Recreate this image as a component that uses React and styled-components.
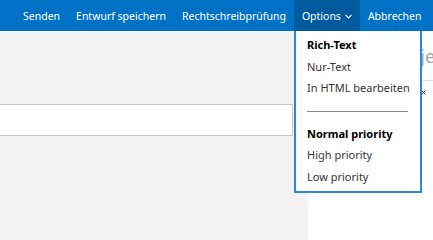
import React from "react";
import styled, { createGlobalStyle } from "styled-components";

const Global = createGlobalStyle`
  html, body { margin: 0; padding: 0; }
  body {
    width: 433px;
    height: 240px;
    overflow: hidden;
    font-family: "Noto Sans", "Open Sans", sans-serif;
    background: #ffffff;
  }
  #root { height: 240px; }
`;

const Page = styled.div`
  position: relative;
  display: flex;
  flex-direction: column;
  width: 433px;
  height: 240px;
  overflow: hidden;
`;

const Toolbar = styled.div`
  display: flex;
  align-items: stretch;
  height: 31px;
  padding-left: 15px;
  background: #0072c6;
  flex: none;
`;

const ToolButton = styled.div`
  display: flex;
  align-items: center;
  gap: 4px;
  padding: 0 8px;
  font-size: 10.5px;
  color: #ffffff;
  white-space: nowrap;
  background: ${(p) => (p.$active ? "#005a9e" : "transparent")};
`;

const Chevron = styled.svg`
  width: 7px;
  height: 5px;
  margin-top: 1px;
`;

const Body = styled.div`
  flex: 1;
  display: flex;
`;

const LeftPane = styled.div`
  width: 308px;
  flex: none;
  background: #f2f2f2;
  padding: 73px 15px 0 0;
  box-sizing: border-box;
`;

const InputBox = styled.div`
  height: 32px;
  margin-left: -1px;
  background: #ffffff;
  border: 1px solid #c8c8c8;
  box-sizing: border-box;
`;

const RightPane = styled.div`
  flex: 1;
  display: flex;
  flex-direction: column;
  background: #ffffff;
  overflow: hidden;
`;

const SubjectRow = styled.div`
  height: 49px;
  display: flex;
  align-items: center;
  padding-left: 25px;
  border-bottom: 1px solid #e1e1e1;
  font-size: 18px;
  color: #a6a6a6;
  white-space: nowrap;
  overflow: hidden;
`;

const AttachRow = styled.div`
  display: flex;
  justify-content: flex-end;
  padding: 9px 7px 0 0;
`;

const Mark = styled.svg`
  width: 5px;
  height: 5px;
`;

const Menu = styled.div`
  position: absolute;
  left: 294px;
  top: 31px;
  width: 128px;
  height: 162px;
  box-sizing: border-box;
  border: 2px solid #2b88d8;
  border-top: none;
  background: #ffffff;
  padding: 3px 0 2px 11px;
  display: flex;
  flex-direction: column;
`;

const MenuItem = styled.div`
  height: 21.7px;
  line-height: 21.7px;
  font-size: 11px;
  color: ${(p) => (p.$bold ? "#000000" : "#333333")};
  font-weight: ${(p) => (p.$bold ? 700 : 400)};
  white-space: nowrap;
`;

const Separator = styled.div`
  width: 101px;
  height: 1px;
  background: #8a8a8a;
  margin: 12px 0 10.5px 0;
`;

export default function App() {
  return (
    <Page>
      <Global />
      <Toolbar>
        <ToolButton>Senden</ToolButton>
        <ToolButton>Entwurf speichern</ToolButton>
        <ToolButton>Rechtschreibprüfung</ToolButton>
        <ToolButton $active>
          Options
          <Chevron viewBox="0 0 7 5">
            <polyline points="0.5,0.8 3.5,3.8 6.5,0.8" fill="none" stroke="#ffffff" strokeWidth="1.2" />
          </Chevron>
        </ToolButton>
        <ToolButton>Abbrechen</ToolButton>
      </Toolbar>
      <Body>
        <LeftPane>
          <InputBox />
        </LeftPane>
        <RightPane>
          <SubjectRow>Neues Projekt</SubjectRow>
          <AttachRow>
            <Mark viewBox="0 0 5 5">
              <path d="M0.5 0.5 L4.5 4.5 M4.5 0.5 L0.5 4.5" stroke="#333" strokeWidth="1" />
            </Mark>
          </AttachRow>
        </RightPane>
      </Body>
      <Menu>
        <MenuItem $bold>Rich-Text</MenuItem>
        <MenuItem>Nur-Text</MenuItem>
        <MenuItem>In HTML bearbeiten</MenuItem>
        <Separator />
        <MenuItem $bold>Normal priority</MenuItem>
        <MenuItem>High priority</MenuItem>
        <MenuItem>Low priority</MenuItem>
      </Menu>
    </Page>
  );
}
